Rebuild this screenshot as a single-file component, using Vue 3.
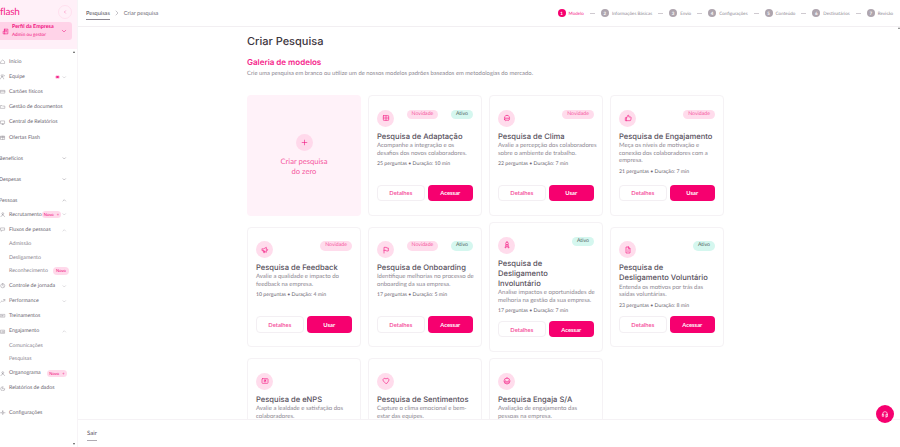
<script setup>
// Nova pesquisa: gallery of survey templates inside the flash admin shell.
const icons = {
  home: 'M4 11l8-7 8 7v9H4z',
  users: 'M9 11a4 4 0 1 0 0-8 4 4 0 0 0 0 8zM2 21c0-4 3-7 7-7s7 3 7 7M17 4a4 4 0 0 1 0 7',
  card: 'M3 6h18v12H3zM3 10h18',
  folder: 'M3 7h6l2 2h10v10H3z',
  chart: 'M4 4h16v12H4zM9 20h6M12 16v4',
  gift: 'M4 9h16v11H4zM4 5h16v4H4zM12 5v15',
  person: 'M12 11a4 4 0 1 0 0-8 4 4 0 0 0 0 8zM4 21c0-4 4-7 8-7s8 3 8 7',
  flow: 'M4 4h16v10H10l-4 5v-5H4z',
  clock: 'M12 3a9 9 0 1 0 0 18 9 9 0 0 0 0-18zM12 7v5l3 2',
  trend: 'M3 18l6-6 4 4 8-9M15 7h6v6',
  book: 'M3 6h18v12H3zM9 10l6 2-6 2z',
  heart: 'M4 5h16v14H4zM8 15v-3M12 15V9M16 15v-5',
  report: 'M12 3a9 9 0 1 0 9 9h-9z',
  gear: 'M12 8a4 4 0 1 0 0 8 4 4 0 0 0 0-8zM12 2v4M12 18v4M2 12h4M18 12h4',
}

const nav = [
  { label: 'Início', icon: 'home' },
  { label: 'Equipe', icon: 'users', dot: true, arrow: 'down' },
  { label: 'Cartões físicos', icon: 'card' },
  { label: 'Gestão de documentos', icon: 'folder' },
  { label: 'Central de Relatórios', icon: 'chart' },
  { label: 'Ofertas Flash', icon: 'gift' },
  { label: 'Benefícios', section: true, arrow: 'down' },
  { label: 'Despesas', section: true, arrow: 'down' },
  { label: 'Pessoas', section: true, arrow: 'up' },
  { label: 'Recrutamento', icon: 'person', badge: 'Novo', plus: true, arrow: 'down' },
  { label: 'Fluxos de pessoas', icon: 'flow', arrow: 'up' },
  { label: 'Admissão', sub: true },
  { label: 'Desligamento', sub: true },
  { label: 'Reconhecimento', sub: true, badge: 'Novo', far: true },
  { label: 'Controle de jornada', icon: 'clock', arrow: 'down', after: true },
  { label: 'Performance', icon: 'trend', arrow: 'down' },
  { label: 'Treinamentos', icon: 'book' },
  { label: 'Engajamento', icon: 'heart', arrow: 'up' },
  { label: 'Comunicações', sub: true },
  { label: 'Pesquisas', sub: true },
  { label: 'Organograma', icon: 'person', badge: 'Novo', plus: true, wide: true },
  { label: 'Relatórios de dados', icon: 'report' },
  { label: 'Configurações', icon: 'gear', last: true },
]

const steps = ['Modelo', 'Informações Básicas', 'Envio', 'Configurações', 'Conteúdo', 'Destinatários', 'Revisão']

// Line breaks in title and text follow the reference card copy.
const templates = [
  {
    title: 'Pesquisa de Adaptação',
    text: 'Acompanhe a integração e os\ndesafios dos novos colaboradores.',
    meta: '25 perguntas • Duração: 10 min',
    tags: ['Novidade', 'Ativo'],
    action: 'Acessar',
    icon: 'M5 5h14a1 1 0 0 1 1 1v12a1 1 0 0 1-1 1H5a1 1 0 0 1-1-1V6a1 1 0 0 1 1-1zM4 12h16M12 5v14',
  },
  {
    title: 'Pesquisa de Clima',
    text: 'Avalie a percepção dos colaboradores\nsobre o ambiente de trabalho.',
    meta: '22 perguntas • Duração: 7 min',
    tags: ['Novidade'],
    action: 'Usar',
    icon: 'M12 4a8 8 0 0 0-7 12M12 4a8 8 0 0 1 7 12M5 16a3 3 0 0 0 5 3h4a3 3 0 1 0 0-5h-4a3 3 0 0 0-5 2zM9 11h.01M15 11h.01',
  },
  {
    title: 'Pesquisa de Engajamento',
    text: 'Meça os níveis de motivação e\nconexão dos colaboradores com a\nempresa.',
    meta: '21 perguntas • Duração: 7 min',
    tags: ['Novidade'],
    action: 'Usar',
    icon: 'M8 11l4-8a2.5 2.5 0 0 1 2.5 2.5V9h5a2 2 0 0 1 2 2.3l-1.2 7A2 2 0 0 1 18.300 20H8zM8 11H4v9h4',
  },
  {
    title: 'Pesquisa de Feedback',
    text: 'Avalie a qualidade e impacto do\nfeedback na empresa.',
    meta: '10 perguntas • Duração: 4 min',
    tags: ['Novidade'],
    action: 'Usar',
    icon: 'M3 9v5h4l9 5V4L7 9zM19 9a3 3 0 0 1 0 5M7 14l1 6h3l-1-5',
  },
  {
    title: 'Pesquisa de Onboarding',
    text: 'Identifique melhorias no processo de\nonboarding da sua empresa.',
    meta: '17 perguntas • Duração: 5 min',
    tags: ['Novidade', 'Ativo'],
    action: 'Acessar',
    icon: 'M6 21V4h7l1 2h5v9h-6l-1-2H6',
  },
  {
    title: 'Pesquisa de\nDesligamento\nInvoluntário',
    text: 'Analise impactos e oportunidades de\nmelhoria na gestão da sua empresa.',
    meta: '17 perguntas • Duração: 7 min',
    tags: ['Ativo'],
    action: 'Acessar',
    icon: 'M12 3a4 4 0 1 0 0 8 4 4 0 0 0 0-8zM9 10L6 21l4-2 2-6 2 6 4 2-3-11',
  },
  {
    title: 'Pesquisa de\nDesligamento Voluntário',
    text: 'Entenda os motivos por trás das\nsaídas voluntárias.',
    meta: '23 perguntas • Duração: 8 min',
    tags: ['Ativo'],
    action: 'Acessar',
    icon: 'M14 3H6v18h12V8M14 3l4 5h-4zM12 11h.01M12 14v3',
  },
  {
    title: 'Pesquisa de eNPS',
    text: 'Avalie a lealdade e satisfação dos\ncolaboradores.',
    meta: '',
    tags: [],
    action: 'Usar',
    icon: 'M5 5h14a2 2 0 0 1 2 2v10a2 2 0 0 1-2 2H5a2 2 0 0 1-2-2V7a2 2 0 0 1 2-2zM12 9a3 3 0 1 0 0 6 3 3 0 0 0 0-6zM12 12l3-3',
  },
  {
    title: 'Pesquisa de Sentimentos',
    text: 'Capture o clima emocional e bem-\nestar das equipes.',
    meta: '',
    tags: [],
    action: 'Usar',
    icon: 'M12 20l-8-8a5 5 0 0 1 8-6 5 5 0 0 1 8 6z',
  },
  {
    title: 'Pesquisa Engaja S/A',
    text: 'Avaliação de engajamento das\npessoas na empresa.',
    meta: '',
    tags: [],
    action: 'Usar',
    icon: 'M12 3a9 9 0 1 0 0 18 9 9 0 0 0 0-18zM5 14h14M8 10h.01M16 10h.01M8 17c2 1.500 6 1.500 8 0',
  },
]
</script>

<template>
  <div class="shell">
    <aside class="sidebar">
      <div class="brand">
        <div class="brand-top">
          <span class="logo">flash</span>
          <span class="collapse">
            <svg viewBox="0 0 24 24" width="4" height="4"><path d="M15 5l-7 7 7 7" /></svg>
          </span>
        </div>
        <div class="profile">
          <svg class="profile-icon" viewBox="0 0 24 24" width="7" height="7"><path d="M9 4h11v16H4v-9h5zM9 4v16M13 9h3M13 13h3" /></svg>
          <div class="profile-text">
            <b>Perfil da Empresa</b>
            <span>Admin ou gestor</span>
          </div>
          <svg class="profile-arrow" viewBox="0 0 24 24" width="6" height="6"><path d="M5 9l7 7 7-7" /></svg>
        </div>
      </div>

      <nav class="nav">
        <span class="caret caret-top"></span>
        <div
          v-for="item in nav"
          :key="item.label"
          class="row"
          :class="{ section: item.section, sub: item.sub, after: item.after, last: item.last }"
        >
          <svg v-if="item.icon" class="row-icon" viewBox="0 0 24 24" width="5.500" height="5.500">
            <path :d="icons[item.icon]" />
          </svg>
          <span class="row-label">{{ item.label }}</span>
          <span v-if="item.dot" class="dot"></span>
          <span v-if="item.badge" class="badge" :class="{ wide: item.wide, far: item.far }">
            {{ item.badge }}<i v-if="item.plus">+</i>
          </span>
          <svg v-if="item.arrow" class="row-arrow" viewBox="0 0 24 24" width="4.500" height="4.500">
            <path :d="item.arrow === 'up' ? 'M5 16l7-7 7 7' : 'M5 9l7 7 7-7'" />
          </svg>
        </div>
        <span class="caret caret-bottom"></span>
      </nav>
    </aside>

    <div class="main">
      <header class="topbar">
        <div class="crumbs">
          <a>Pesquisas</a>
          <svg viewBox="0 0 24 24" width="6" height="6"><path d="M8 4l8 8-8 8" /></svg>
          <span>Criar pesquisa</span>
        </div>
        <ol class="steps">
          <li v-for="(step, i) in steps" :key="step" class="step" :class="{ active: i === 0 }">
            <b>{{ i + 1 }}</b>
            <span>{{ step }}</span>
            <em v-if="i < steps.length - 1"></em>
          </li>
        </ol>
      </header>

      <main class="content">
        <h1>Criar Pesquisa</h1>
        <h2>Galeria de modelos</h2>
        <p class="lead">Crie uma pesquisa em branco ou utilize um de nossos modelos padrões baseados em metodologias do mercado.</p>

        <div class="grid">
          <div class="card-new">
            <span class="plus">
              <svg viewBox="0 0 24 24" width="7" height="7"><path d="M12 4v16M4 12h16" /></svg>
            </span>
            <span class="new-label">Criar pesquisa<br />do zero</span>
          </div>

          <article v-for="t in templates" :key="t.title" class="card">
            <div class="card-top">
              <span class="icon">
                <svg viewBox="0 0 24 24" width="8" height="8"><path :d="t.icon" /></svg>
              </span>
              <span v-for="tag in t.tags" :key="tag" class="tag" :class="{ ok: tag === 'Ativo' }">{{ tag }}</span>
            </div>
            <h3>{{ t.title }}</h3>
            <p class="desc">{{ t.text }}</p>
            <p class="meta">{{ t.meta }}</p>
            <div class="actions">
              <button class="ghost">Detalhes</button>
              <button class="solid">{{ t.action }}</button>
            </div>
          </article>
        </div>
      </main>

      <footer class="foot"><a>Sair</a></footer>
    </div>

    <span class="scroll-mark"></span>

    <button class="help" aria-label="Ajuda">
      <svg viewBox="0 0 24 24" width="8" height="8"><path d="M5 14v-2a7 7 0 0 1 14 0v2M5 13h3v6H5zM16 13h3v6h-3zM19 19c0 2-2 2-5 2" /></svg>
    </button>
  </div>
</template>

<style scoped>
.shell {
  position: relative;
  display: grid;
  grid-template-columns: 78px 1fr;
  height: 447px;
  overflow: hidden;
  background: #fff;
  color: #4a4550;
  font-family: Lato, "Open Sans", sans-serif;
  text-rendering: geometricPrecision;
}

svg {
  fill: none;
  stroke: currentColor;
  stroke-width: 2;
  stroke-linecap: round;
  stroke-linejoin: round;
  flex: none;
}

/* Sidebar */
.sidebar {
  display: flex;
  flex-direction: column;
  min-width: 0;
  border-right: 1px solid #f7f4f7;
}

.brand {
  height: 49px;
  background: #fff0f8;
  padding: 3px 5px 0 0;
  box-sizing: border-box;
}

.brand-top {
  display: flex;
  align-items: center;
  justify-content: space-between;
  height: 17px;
}

.logo {
  color: #f5258a;
  font-size: 10px;
  font-weight: 400;
  letter-spacing: -0.2px;
  line-height: 16px;
}

.collapse {
  display: flex;
  align-items: center;
  justify-content: center;
  width: 14px;
  height: 14px;
  border: 1px solid #ffe0ef;
  border-radius: 50%;
  box-sizing: border-box;
  color: #f5258a;
}

.profile {
  display: flex;
  align-items: center;
  height: 18px;
  margin-top: 2px;
  background: #ffd3e8;
  border-radius: 0 3px 3px 0;
  color: #f0107e;
}

.profile-icon {
  margin: 0 3px 0 2px;
}

.profile-text {
  display: flex;
  flex: 1;
  flex-direction: column;
  min-width: 0;
  line-height: 7px;
}

.profile-text b {
  font-size: 5.400px;
  font-weight: 700;
}

.profile-text span {
  font-size: 4.700px;
}

.profile-arrow {
  margin-right: 5px;
}

.nav {
  position: relative;
  flex: 1;
  padding-top: 5px;
}

.row {
  display: flex;
  align-items: center;
  height: 15.200px;
  color: #6d6873;
  font-size: 5.300px;
  white-space: nowrap;
}

.row-icon {
  margin: 0 3.500px 0 0;
  color: #8d8892;
}

.row-label {
  min-width: 0;
}

.row-arrow {
  position: absolute;
  left: 62px;
  color: #a8a3ad;
}

.section {
  height: 15px;
  margin-top: 6px;
  margin-left: -1px;
}

.section .row-arrow {
  color: #6d6873;
}

.section + .row:not(.section) {
  margin-top: -1px;
}

.sub {
  height: 13.400px;
  padding-left: 9px;
  color: #8d8892;
}

.after {
  margin-top: 0.500px;
}

.last {
  margin-top: 9px;
}

.dot {
  position: absolute;
  left: 55px;
  width: 4.500px;
  height: 4.500px;
  background: #f5258a;
  border: 1px solid #ffd3e8;
  border-radius: 50%;
  box-sizing: border-box;
}

.badge {
  position: absolute;
  left: 42px;
  display: flex;
  align-items: center;
  justify-content: center;
  gap: 3px;
  width: 19px;
  height: 7px;
  background: #ffd9eb;
  border-radius: 4px;
  color: #f0107e;
  font-size: 4.200px;
}

.badge.wide {
  left: 47px;
  width: 20px;
}

.badge.far {
  left: 53px;
  width: 16px;
  height: 8px;
}

.badge i {
  font-style: normal;
}

.caret {
  position: absolute;
  left: 73px;
  width: 0;
  height: 0;
  border-left: 1.500px solid transparent;
  border-right: 1.500px solid transparent;
}

.caret-top {
  top: 2px;
  border-bottom: 2px solid #555;
}

.caret-bottom {
  bottom: 2px;
  border-top: 2px solid #555;
}

.scroll-mark {
  position: absolute;
  top: 27px;
  right: 0;
  width: 0;
  height: 0;
  border-left: 1px solid transparent;
  border-right: 1px solid transparent;
  border-bottom: 2px solid #777;
}

/* Top bar */
.main {
  display: flex;
  flex-direction: column;
  min-width: 0;
  height: 447px;
}

.topbar {
  display: flex;
  flex: none;
  align-items: center;
  justify-content: space-between;
  height: 27px;
  padding: 0 7px 0 8px;
  border-bottom: 1px solid #f2eff2;
  box-sizing: border-box;
}

.crumbs {
  display: flex;
  align-items: center;
  gap: 4px;
  font-size: 5.600px;
  color: #6d6873;
}

.crumbs a {
  color: #4a4550;
  padding-bottom: 2px;
  border-bottom: 1px solid #8d8892;
  margin-top: 3px;
}

.crumbs svg {
  color: #8d8892;
}

.steps {
  display: flex;
  align-items: center;
  gap: 6px;
  margin: 0;
  padding: 0;
  list-style: none;
}

.step {
  display: flex;
  align-items: center;
  gap: 3px;
  color: #8d8892;
  font-size: 4.540px;
}

.step b {
  display: flex;
  align-items: center;
  justify-content: center;
  width: 8px;
  height: 8px;
  background: #aea5ae;
  border-radius: 50%;
  color: #fff;
  font-size: 4.500px;
}

.step em {
  width: 5px;
  height: 1px;
  margin-left: 3px;
  background: #cfcad0;
}

.step.active {
  color: #f5258a;
}

.step.active b {
  background: #f6006f;
}

/* Gallery */
.content {
  flex: 1;
  min-height: 0;
  padding: 8px 0 0 169px;
  overflow: hidden;
}

h1 {
  margin: 0;
  color: #3c3640;
  font-family: Inter, sans-serif;
  font-size: 11px;
  font-weight: 500;
  line-height: 13px;
}

h2 {
  margin: 9px 0 0;
  color: #f5258a;
  font-family: Inter, sans-serif;
  font-size: 8px;
  font-weight: 600;
  line-height: 10px;
}

.lead {
  margin: 2.500px 0 0;
  color: #8d8892;
  font-size: 5.860px;
  line-height: 8px;
}

.grid {
  display: grid;
  grid-template-columns: repeat(4, 114px);
  align-items: center;
  gap: 6.600px 7px;
  margin-top: 17.500px;
}

.card-new {
  display: flex;
  flex-direction: column;
  align-items: center;
  justify-content: center;
  height: 120.500px;
  background: #fff2f9;
  border-radius: 4px;
  color: #f5589f;
}

.plus {
  display: flex;
  align-items: center;
  justify-content: center;
  width: 17px;
  height: 17px;
  margin-bottom: 5px;
  background: #ffd9eb;
  border-radius: 50%;
  color: #f0107e;
}

.new-label {
  font-size: 7.600px;
  line-height: 10px;
  text-align: center;
}

.card {
  display: flex;
  flex-direction: column;
  min-height: 120.500px;
  padding: 13.500px 8px 13.500px 8px;
  background: #fff;
  border: 1px solid #f5f2f5;
  border-radius: 4px;
  box-sizing: border-box;
}

.card-top {
  display: flex;
  align-items: flex-start;
  justify-content: space-between;
  height: 17px;
}

.icon {
  display: flex;
  align-items: center;
  justify-content: center;
  width: 17px;
  height: 17px;
  background: #ffdcec;
  border-radius: 50%;
  color: #f5258a;
}

.tag {
  padding: 0 5px;
  background: #ffdcec;
  border-radius: 5px;
  color: #f5589f;
  font-size: 5.200px;
  line-height: 9.500px;
}

.tag.ok {
  background: #d5f7ef;
  color: #4d5c5c;
}

h3 {
  margin: 5px 0 0;
  color: #57505c;
  font-family: Inter, sans-serif;
  font-size: 7.600px;
  font-weight: 500;
  line-height: 10.200px;
  white-space: pre-line;
}

.desc {
  margin: 0;
  color: #8d8892;
  font-size: 6px;
  line-height: 7.800px;
  white-space: pre;
}

.meta {
  min-height: 8px;
  margin: 2.500px 0 5.500px;
  color: #6d6873;
  font-size: 5.200px;
  line-height: 8px;
}

.actions {
  display: flex;
  gap: 3px;
  margin-top: auto;
}

.actions button {
  flex: 1;
  height: 16.500px;
  padding: 0;
  border-radius: 4px;
  font-family: inherit;
  font-size: 5.800px;
  font-weight: 700;
}

.ghost {
  background: #fff;
  border: 1px solid #f3eff3;
  color: #f5589f;
}

.solid {
  background: #f6006f;
  border: 0;
  color: #fff;
}

/* Footer */
.foot {
  flex: none;
  height: 28px;
  padding: 10px 0 0 9px;
  background: #fff;
  border-top: 1px solid #f5f2f5;
  box-sizing: border-box;
  font-size: 6px;
  color: #57505c;
}

.foot a {
  display: inline-block;
  padding-bottom: 3px;
  border-bottom: 1px solid #b0abb3;
}

.help {
  position: absolute;
  left: 876px;
  top: 405px;
  display: flex;
  align-items: center;
  justify-content: center;
  width: 18px;
  height: 18px;
  padding: 0;
  background: #f6006f;
  border: 0;
  border-radius: 50%;
  color: #fff;
}
</style>
